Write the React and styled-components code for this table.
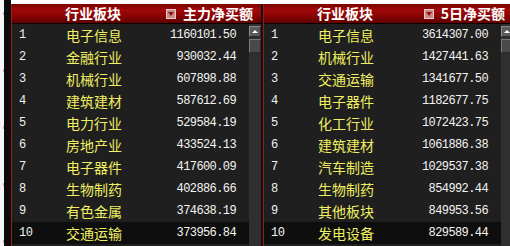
import React from 'react';
import styled, { createGlobalStyle } from 'styled-components';

const Global = createGlobalStyle`
  html, body { margin: 0; padding: 0; background: #fff; }
  body { width: 510px; height: 246px; overflow: hidden; }
`;

const Page = styled.div`
  display: flex;
  width: 510px;
  height: 246px;
  overflow: hidden;
  background: #fff;
`;

const Gutter = styled.div`
  flex: 0 0 11px;
  display: flex;
`;

const GutterLight = styled.div`
  width: 4px;
  background:
    repeating-linear-gradient(
      to bottom,
      transparent 0 12px,
      #e3a3b8 12px 15px,
      transparent 15px 57px
    ) 3px 0 / 1px 100% no-repeat,
    #f6f6f6;
`;

const GutterDark = styled.div`
  flex: 1;
  background: #0b0b0b;
`;

const Panel = styled.section`
  flex: 0 0 249px;
  margin-top: 4px;
  border-left: 1px solid #a01818;
  background: #1f1f1f;
  display: flex;
  flex-direction: column;
  min-width: 0;
`;

const Divider = styled.div`
  flex: 0 0 2px;
  margin-top: 4px;
  background: #121212;
`;

const Header = styled.div`
  height: 19px;
  border-bottom: 1px solid #0a0000;
  background: linear-gradient(#780000, #a10909 30%, #8c0404 60%, #5e0000);
  display: grid;
  grid-template-columns: 46px 1fr auto;
  align-items: center;
  padding: 0 8px 0 7px;
  color: #fff;
  font: bold 14px "Noto Sans CJK SC", sans-serif;
  line-height: 19px;
  white-space: nowrap;
`;

const SortLabel = styled.div`
  display: flex;
  align-items: center;
  gap: 7px;
`;

const SortIcon = styled.span`
  width: 8px;
  height: 8px;
  border: 1px solid #f2c8c8;
  background: #c98a8a;
  display: flex;
  align-items: center;
  justify-content: center;
  &::after {
    content: '';
    border-left: 3px solid transparent;
    border-right: 3px solid transparent;
    border-top: 4px solid #9a0c0c;
    margin-top: 1px;
  }
`;

const Body = styled.div`
  flex: 1;
  display: flex;
  min-height: 0;
`;

const Rows = styled.div`
  flex: 1;
  display: flex;
  flex-direction: column;
`;

const Row = styled.div`
  height: 22px;
  flex: 0 0 22px;
  display: grid;
  grid-template-columns: 47px 1fr auto;
  align-items: center;
  padding: 0 13px 0 7px;
  background: ${(p) => (p.$active ? '#0e0e0e' : '#1f1f1f')};
`;

const Num = styled.span`
  color: #f2f2f2;
  font: 12px "Liberation Mono", monospace;
  letter-spacing: -0.4px;
`;

const Name = styled.span`
  color: #f0ef62;
  font: 14px "Noto Sans CJK SC", sans-serif;
  line-height: 22px;
`;

const Value = styled.span`
  color: #f4f4f4;
  font: 12px "Liberation Mono", monospace;
  letter-spacing: -0.6px;
`;

const Scrollbar = styled.div`
  flex: 0 0 12px;
  background: #2f2f2f;
  display: flex;
  flex-direction: column;
  gap: 2px;
  padding-top: 2px;
`;

const ScrollButton = styled.div`
  height: 9px;
  background: #5a5a5a;
  border-top: 1px solid #8a8a8a;
  border-left: 1px solid #8a8a8a;
  border-bottom: 1px solid #2a2a2a;
  border-right: 1px solid #2a2a2a;
  display: flex;
  align-items: center;
  justify-content: center;
  &::after {
    content: '';
    border-left: 3px solid transparent;
    border-right: 3px solid transparent;
    border-bottom: 3px solid #fff;
  }
`;

const Thumb = styled.div`
  height: 12px;
  background: #4a4a4a;
  border-top: 1px solid #7a7a7a;
  border-left: 1px solid #7a7a7a;
  border-bottom: 1px solid #2a2a2a;
  border-right: 1px solid #2a2a2a;
`;

const left = [
  ['电子信息', '1160101.50'],
  ['金融行业', '930032.44'],
  ['机械行业', '607898.88'],
  ['建筑建材', '587612.69'],
  ['电力行业', '529584.19'],
  ['房地产业', '433524.13'],
  ['电子器件', '417600.09'],
  ['生物制药', '402886.66'],
  ['有色金属', '374638.19'],
  ['交通运输', '373956.84'],
];

const right = [
  ['电子信息', '3614307.00'],
  ['机械行业', '1427441.63'],
  ['交通运输', '1341677.50'],
  ['电子器件', '1182677.75'],
  ['化工行业', '1072423.75'],
  ['建筑建材', '1061886.38'],
  ['汽车制造', '1029537.38'],
  ['生物制药', '854992.44'],
  ['其他板块', '849953.56'],
  ['发电设备', '829589.44'],
];

function Board({ title, data }) {
  return (
    <Panel>
      <Header>
        <span />
        <span>行业板块</span>
        <SortLabel>
          <SortIcon />
          <span>{title}</span>
        </SortLabel>
      </Header>
      <Body>
        <Rows>
          {data.map(([name, val], i) => (
            <Row key={name + i} $active={i === 9}>
              <Num>{i + 1}</Num>
              <Name>{name}</Name>
              <Value>{val}</Value>
            </Row>
          ))}
        </Rows>
        <Scrollbar>
          <ScrollButton />
          <Thumb />
        </Scrollbar>
      </Body>
    </Panel>
  );
}

export default function App() {
  return (
    <>
      <Global />
      <Page>
        <Gutter>
          <GutterLight />
          <GutterDark />
        </Gutter>
        <Board title="主力净买额" data={left} />
        <Divider />
        <Board title="5日净买额" data={right} />
      </Page>
    </>
  );
}
